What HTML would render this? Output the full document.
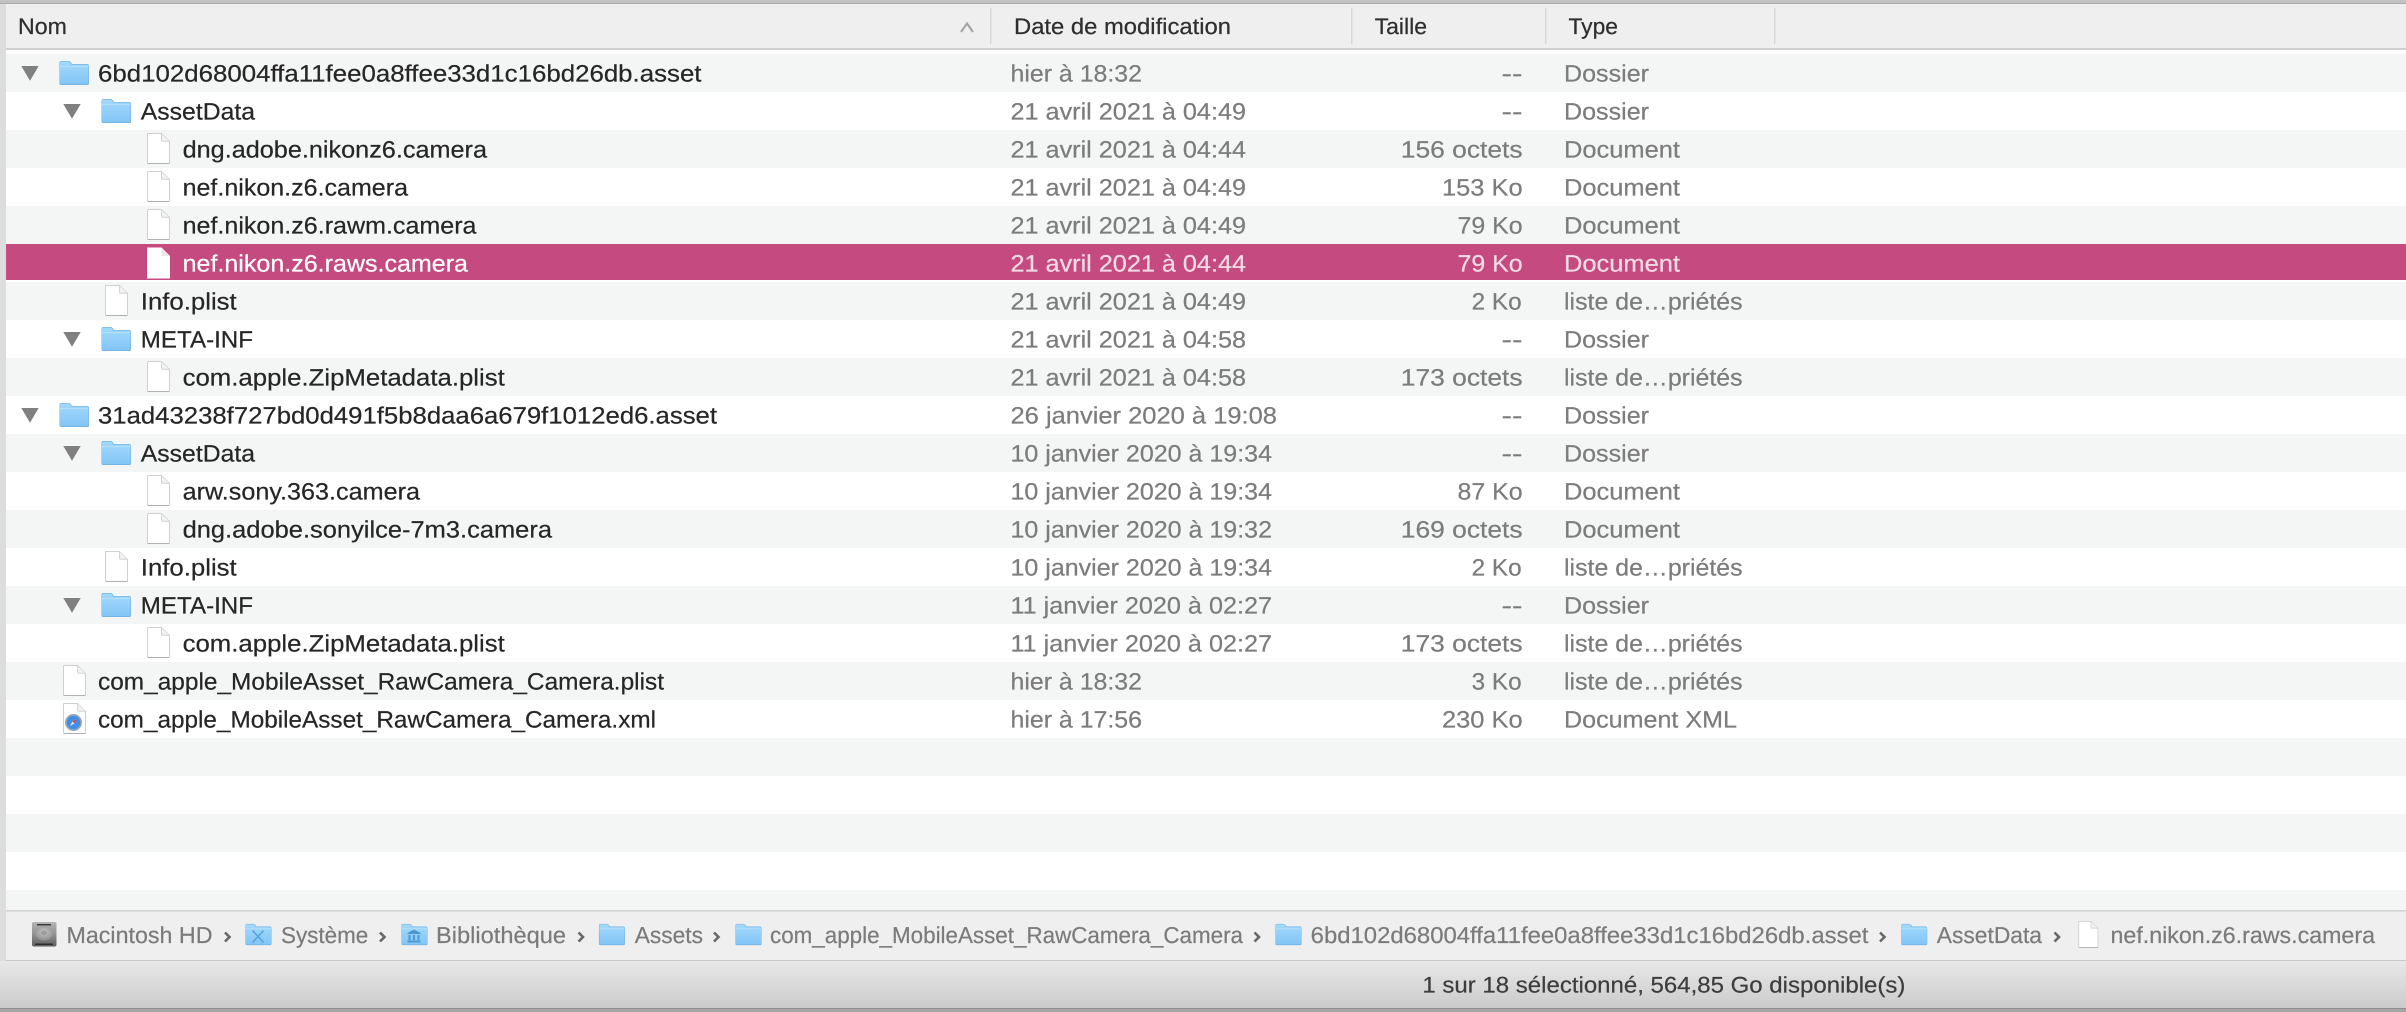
<!DOCTYPE html>
<html lang="fr">
<head>
<meta charset="utf-8">
<title>Finder</title>
<style>
html,body{margin:0;padding:0;background:#fff;width:2406px;height:1012px;overflow:hidden}
svg{display:block;filter:blur(.35px)}
text{font-family:"Liberation Sans",sans-serif;text-rendering:geometricPrecision;white-space:pre;stroke-width:.22px}
.h{font-size:22.5px;fill:#2e2e2e;stroke:#2e2e2e}
.n{font-size:23.6px;fill:#262626;stroke:#262626}
.d{font-size:23.6px;fill:#7c7c7c;stroke:#7c7c7c}
.w{font-size:23.6px;fill:#fff;stroke:#fff}
.p{font-size:23.6px;fill:#f4dbe6;stroke:#f4dbe6}
.b{font-size:23px;fill:#7b7b7b;stroke:#7b7b7b}
.s{font-size:22.5px;fill:#3d3d3d;stroke:#3d3d3d}
</style>
</head>
<body>
<svg xmlns="http://www.w3.org/2000/svg" width="2406" height="1012" viewBox="0 0 2406 1012">
<defs>
<linearGradient id="fg" x1="0" y1="0" x2="0" y2="1"><stop offset="0" stop-color="#a3d9fb"/><stop offset="1" stop-color="#82c5f6"/></linearGradient>
<linearGradient id="sb" x1="0" y1="0" x2="0" y2="1"><stop offset="0" stop-color="#e8e8e8"/><stop offset="1" stop-color="#cbcbcb"/></linearGradient>
<linearGradient id="hd" x1="0" y1="0" x2="0" y2="1"><stop offset="0" stop-color="#b4b4b4"/><stop offset=".55" stop-color="#8d8d8d"/><stop offset="1" stop-color="#5c5c5c"/></linearGradient>
<radialGradient id="pl" cx=".5" cy=".35" r=".7"><stop offset="0" stop-color="#c4c4c4"/><stop offset="1" stop-color="#8b8b8b"/></radialGradient>
<symbol id="folder" viewBox="0 0 30 24">
<path d="M.5 2Q.5 0 2.5 0H9.5Q11 0 12 1.5L13 3H28Q30 3 30 5V22.5Q30 24 28.5 24H2Q.5 24 .5 22.5Z" fill="#6fb0e2"/>
<path d="M1 2.2Q1 .6 2.6 .6H9.4Q10.7 .6 11.5 2L12.4 3.6H28Q29.5 3.6 29.5 5.2V22.3Q29.5 23.2 28.5 23.2H2Q1 23.2 1 22.3Z" fill="url(#fg)"/>
<path d="M1 5.6H29.5" stroke="#b5e1fc" stroke-width="1"/>
</symbol>
<symbol id="file" viewBox="0 0 23 31">
<path d="M.5 1Q.5 .5 1 .5H14.5L22.5 8.5V30Q22.5 30.5 22 30.5H1Q.5 30.5 .5 30Z" fill="#fff" stroke="#cfcfcf" stroke-width="1"/>
<path d="M14.5 .8V7Q14.5 8.3 15.8 8.3H22.2" fill="#f2f2f2" stroke="#d4d4d4" stroke-width="1"/>
<path d="M1 30.5H22" stroke="#b0b0b0" stroke-width="1"/>
</symbol>
<symbol id="tri" viewBox="0 0 17.4 14.7"><path d="M0 0H17.4L8.7 14.7Z" fill="#808080"/></symbol>
<symbol id="chev" viewBox="0 0 8 11"><path d="M1.5 1L6 5.5L1.5 10" fill="none" stroke="#686868" stroke-width="2.6"/></symbol>
</defs>

<!-- window chrome -->
<rect width="2406" height="1012" fill="#fff"/>
<rect x="0" y="0" width="2406" height="4" fill="#c2c2c2"/>
<rect x="0" y="3" width="2406" height="1" fill="#ababab"/>
<rect x="0" y="4" width="2406" height="44" fill="#efefef"/>
<rect x="0" y="48" width="2406" height="2" fill="#cfcfcf"/>
<rect x="0" y="50" width="2406" height="4" fill="#fff"/>

<!-- row stripes -->
<g fill="#f4f5f5">
<rect x="0" y="54" width="2406" height="38"/>
<rect x="0" y="130" width="2406" height="38"/>
<rect x="0" y="206" width="2406" height="38"/>
<rect x="0" y="282" width="2406" height="38"/>
<rect x="0" y="358" width="2406" height="38"/>
<rect x="0" y="434" width="2406" height="38"/>
<rect x="0" y="510" width="2406" height="38"/>
<rect x="0" y="586" width="2406" height="38"/>
<rect x="0" y="662" width="2406" height="38"/>
<rect x="0" y="738" width="2406" height="38"/>
<rect x="0" y="814" width="2406" height="38"/>
<rect x="0" y="890" width="2406" height="20"/>
</g>
<rect x="0" y="244" width="2406" height="36" fill="#c54a80"/>

<!-- path bar + status -->
<rect x="0" y="910" width="2406" height="51" fill="#efefef"/>
<rect x="0" y="910" width="2406" height="1.5" fill="#d2d2d2"/>
<rect x="0" y="960" width="2406" height="1.5" fill="#c8c8c8"/>
<rect x="0" y="961" width="2406" height="47" fill="url(#sb)"/>
<rect x="0" y="1008" width="2406" height="1" fill="#8f8f8f"/>
<rect x="0" y="1009" width="2406" height="3" fill="#a6a6a6"/>
<rect x="0" y="4" width="6" height="957" fill="#dedddd"/>

<!-- header -->
<text class="h" x="18" y="34" textLength="49" lengthAdjust="spacingAndGlyphs">Nom</text>
<path d="M961 32L967 23.5L973 32" fill="none" stroke="#a2a2a2" stroke-width="2"/>
<g fill="#d8d8d8"><rect x="990" y="8" width="1.5" height="36"/><rect x="1351" y="8" width="1.5" height="36"/><rect x="1545" y="8" width="1.5" height="36"/><rect x="1774" y="8" width="1.5" height="36"/></g>
<text class="h" x="1014" y="34" textLength="217" lengthAdjust="spacingAndGlyphs">Date de modification</text>
<text class="h" x="1374.6" y="34" textLength="52.4" lengthAdjust="spacingAndGlyphs">Taille</text>
<text class="h" x="1568.5" y="34" textLength="49.5" lengthAdjust="spacingAndGlyphs">Type</text>

<!-- tree icons -->
<use href="#tri" x="21.3" y="66" width="17.4" height="14.7"/><use href="#folder" x="59" y="61" width="30" height="24"/>
<use href="#tri" x="63.3" y="104" width="17.4" height="14.7"/><use href="#folder" x="101" y="99" width="30" height="24"/>
<use href="#file" x="147" y="133" width="23" height="31"/>
<use href="#file" x="147" y="171" width="23" height="31"/>
<use href="#file" x="147" y="209" width="23" height="31"/>
<path d="M147 247.500H161.500L170 256V278.500H147Z" fill="#fff"/><path d="M161.500 247.500V256H170" fill="#f3e3ea"/>
<use href="#file" x="105" y="285" width="23" height="31"/>
<use href="#tri" x="63.3" y="332" width="17.4" height="14.7"/><use href="#folder" x="101" y="327" width="30" height="24"/>
<use href="#file" x="147" y="361" width="23" height="31"/>
<use href="#tri" x="21.3" y="408" width="17.4" height="14.7"/><use href="#folder" x="59" y="403" width="30" height="24"/>
<use href="#tri" x="63.3" y="446" width="17.4" height="14.7"/><use href="#folder" x="101" y="441" width="30" height="24"/>
<use href="#file" x="147" y="475" width="23" height="31"/>
<use href="#file" x="147" y="513" width="23" height="31"/>
<use href="#file" x="105" y="551" width="23" height="31"/>
<use href="#tri" x="63.3" y="598" width="17.4" height="14.7"/><use href="#folder" x="101" y="593" width="30" height="24"/>
<use href="#file" x="147" y="627" width="23" height="31"/>
<use href="#file" x="63" y="665" width="23" height="31"/>
<use href="#file" x="63" y="703" width="23" height="31"/>
<circle cx="73.500" cy="722.500" r="8.500" fill="#9aa5b5"/><circle cx="73.500" cy="722.500" r="6.800" fill="#3f8fe6"/><path d="M77 719L72.500 721.500L70 726L74.500 723.500Z" fill="#e8e8f0"/><path d="M77 719L72.500 721.500L74.500 723.500Z" fill="#d8403a"/>

<!-- names -->
<text class="n" x="98" y="81.500" textLength="603.500" lengthAdjust="spacingAndGlyphs">6bd102d68004ffa11fee0a8ffee33d1c16bd26db.asset</text>
<text class="n" x="140.800" y="119.500" textLength="114.200" lengthAdjust="spacingAndGlyphs">AssetData</text>
<text class="n" x="182.600" y="157.500" textLength="304.400" lengthAdjust="spacingAndGlyphs">dng.adobe.nikonz6.camera</text>
<text class="n" x="182.600" y="195.500" textLength="225.400" lengthAdjust="spacingAndGlyphs">nef.nikon.z6.camera</text>
<text class="n" x="182.600" y="233.500" textLength="293.900" lengthAdjust="spacingAndGlyphs">nef.nikon.z6.rawm.camera</text>
<text class="w" x="182.600" y="271.500" textLength="285.400" lengthAdjust="spacingAndGlyphs">nef.nikon.z6.raws.camera</text>
<text class="n" x="140.800" y="309.500" textLength="95.900" lengthAdjust="spacingAndGlyphs">Info.plist</text>
<text class="n" x="140.800" y="347.500" textLength="112.200" lengthAdjust="spacingAndGlyphs">META-INF</text>
<text class="n" x="182.600" y="385.500" textLength="322.200" lengthAdjust="spacingAndGlyphs">com.apple.ZipMetadata.plist</text>
<text class="n" x="98" y="423.500" textLength="619" lengthAdjust="spacingAndGlyphs">31ad43238f727bd0d491f5b8daa6a679f1012ed6.asset</text>
<text class="n" x="140.800" y="461.500" textLength="114.200" lengthAdjust="spacingAndGlyphs">AssetData</text>
<text class="n" x="182.600" y="499.500" textLength="237.400" lengthAdjust="spacingAndGlyphs">arw.sony.363.camera</text>
<text class="n" x="182.600" y="537.500" textLength="369.400" lengthAdjust="spacingAndGlyphs">dng.adobe.sonyilce-7m3.camera</text>
<text class="n" x="140.800" y="575.500" textLength="95.900" lengthAdjust="spacingAndGlyphs">Info.plist</text>
<text class="n" x="140.800" y="613.500" textLength="112.200" lengthAdjust="spacingAndGlyphs">META-INF</text>
<text class="n" x="182.600" y="651.500" textLength="322.200" lengthAdjust="spacingAndGlyphs">com.apple.ZipMetadata.plist</text>
<text class="n" x="98" y="689.500" textLength="566" lengthAdjust="spacingAndGlyphs">com_apple_MobileAsset_RawCamera_Camera.plist</text>
<text class="n" x="98" y="727.500" textLength="558" lengthAdjust="spacingAndGlyphs">com_apple_MobileAsset_RawCamera_Camera.xml</text>

<!-- dates -->
<text class="d" x="1010.500" y="81.500" textLength="131.500" lengthAdjust="spacingAndGlyphs">hier à 18:32</text>
<text class="d" x="1010.500" y="119.500" textLength="235.500" lengthAdjust="spacingAndGlyphs">21 avril 2021 à 04:49</text>
<text class="d" x="1010.500" y="157.500" textLength="235.500" lengthAdjust="spacingAndGlyphs">21 avril 2021 à 04:44</text>
<text class="d" x="1010.500" y="195.500" textLength="235.500" lengthAdjust="spacingAndGlyphs">21 avril 2021 à 04:49</text>
<text class="d" x="1010.500" y="233.500" textLength="235.500" lengthAdjust="spacingAndGlyphs">21 avril 2021 à 04:49</text>
<text class="p" x="1010.500" y="271.500" textLength="235.500" lengthAdjust="spacingAndGlyphs">21 avril 2021 à 04:44</text>
<text class="d" x="1010.500" y="309.500" textLength="235.500" lengthAdjust="spacingAndGlyphs">21 avril 2021 à 04:49</text>
<text class="d" x="1010.500" y="347.500" textLength="235.500" lengthAdjust="spacingAndGlyphs">21 avril 2021 à 04:58</text>
<text class="d" x="1010.500" y="385.500" textLength="235.500" lengthAdjust="spacingAndGlyphs">21 avril 2021 à 04:58</text>
<text class="d" x="1010.500" y="423.500" textLength="266.500" lengthAdjust="spacingAndGlyphs">26 janvier 2020 à 19:08</text>
<text class="d" x="1010.500" y="461.500" textLength="261.500" lengthAdjust="spacingAndGlyphs">10 janvier 2020 à 19:34</text>
<text class="d" x="1010.500" y="499.500" textLength="261.500" lengthAdjust="spacingAndGlyphs">10 janvier 2020 à 19:34</text>
<text class="d" x="1010.500" y="537.500" textLength="261.500" lengthAdjust="spacingAndGlyphs">10 janvier 2020 à 19:32</text>
<text class="d" x="1010.500" y="575.500" textLength="261.500" lengthAdjust="spacingAndGlyphs">10 janvier 2020 à 19:34</text>
<text class="d" x="1010.500" y="613.500" textLength="261.500" lengthAdjust="spacingAndGlyphs">11 janvier 2020 à 02:27</text>
<text class="d" x="1010.500" y="651.500" textLength="261.500" lengthAdjust="spacingAndGlyphs">11 janvier 2020 à 02:27</text>
<text class="d" x="1010.500" y="689.500" textLength="131.500" lengthAdjust="spacingAndGlyphs">hier à 18:32</text>
<text class="d" x="1010.500" y="727.500" textLength="131.500" lengthAdjust="spacingAndGlyphs">hier à 17:56</text>

<!-- sizes -->
<text class="d" x="1501.500" y="81.500" textLength="21" lengthAdjust="spacingAndGlyphs">--</text>
<text class="d" x="1501.500" y="119.500" textLength="21" lengthAdjust="spacingAndGlyphs">--</text>
<text class="d" x="1400.800" y="157.500" textLength="121.800" lengthAdjust="spacingAndGlyphs">156 octets</text>
<text class="d" x="1442" y="195.500" textLength="80.600" lengthAdjust="spacingAndGlyphs">153 Ko</text>
<text class="d" x="1457.500" y="233.500" textLength="65.100" lengthAdjust="spacingAndGlyphs">79 Ko</text>
<text class="p" x="1457.500" y="271.500" textLength="65.100" lengthAdjust="spacingAndGlyphs">79 Ko</text>
<text class="d" x="1471.600" y="309.500" textLength="50" lengthAdjust="spacingAndGlyphs">2 Ko</text>
<text class="d" x="1501.500" y="347.500" textLength="21" lengthAdjust="spacingAndGlyphs">--</text>
<text class="d" x="1400.800" y="385.500" textLength="121.800" lengthAdjust="spacingAndGlyphs">173 octets</text>
<text class="d" x="1501.500" y="423.500" textLength="21" lengthAdjust="spacingAndGlyphs">--</text>
<text class="d" x="1501.500" y="461.500" textLength="21" lengthAdjust="spacingAndGlyphs">--</text>
<text class="d" x="1457.500" y="499.500" textLength="65.100" lengthAdjust="spacingAndGlyphs">87 Ko</text>
<text class="d" x="1400.800" y="537.500" textLength="121.800" lengthAdjust="spacingAndGlyphs">169 octets</text>
<text class="d" x="1471.600" y="575.500" textLength="50" lengthAdjust="spacingAndGlyphs">2 Ko</text>
<text class="d" x="1501.500" y="613.500" textLength="21" lengthAdjust="spacingAndGlyphs">--</text>
<text class="d" x="1400.800" y="651.500" textLength="121.800" lengthAdjust="spacingAndGlyphs">173 octets</text>
<text class="d" x="1471.600" y="689.500" textLength="50" lengthAdjust="spacingAndGlyphs">3 Ko</text>
<text class="d" x="1442" y="727.500" textLength="80.600" lengthAdjust="spacingAndGlyphs">230 Ko</text>

<!-- types -->
<text class="d" x="1564" y="81.500" textLength="85" lengthAdjust="spacingAndGlyphs">Dossier</text>
<text class="d" x="1564" y="119.500" textLength="85" lengthAdjust="spacingAndGlyphs">Dossier</text>
<text class="d" x="1564" y="157.500" textLength="116" lengthAdjust="spacingAndGlyphs">Document</text>
<text class="d" x="1564" y="195.500" textLength="116" lengthAdjust="spacingAndGlyphs">Document</text>
<text class="d" x="1564" y="233.500" textLength="116" lengthAdjust="spacingAndGlyphs">Document</text>
<text class="p" x="1564" y="271.500" textLength="116" lengthAdjust="spacingAndGlyphs">Document</text>
<text class="d" x="1564" y="309.500" textLength="178.600" lengthAdjust="spacingAndGlyphs">liste de…priétés</text>
<text class="d" x="1564" y="347.500" textLength="85" lengthAdjust="spacingAndGlyphs">Dossier</text>
<text class="d" x="1564" y="385.500" textLength="178.600" lengthAdjust="spacingAndGlyphs">liste de…priétés</text>
<text class="d" x="1564" y="423.500" textLength="85" lengthAdjust="spacingAndGlyphs">Dossier</text>
<text class="d" x="1564" y="461.500" textLength="85" lengthAdjust="spacingAndGlyphs">Dossier</text>
<text class="d" x="1564" y="499.500" textLength="116" lengthAdjust="spacingAndGlyphs">Document</text>
<text class="d" x="1564" y="537.500" textLength="116" lengthAdjust="spacingAndGlyphs">Document</text>
<text class="d" x="1564" y="575.500" textLength="178.600" lengthAdjust="spacingAndGlyphs">liste de…priétés</text>
<text class="d" x="1564" y="613.500" textLength="85" lengthAdjust="spacingAndGlyphs">Dossier</text>
<text class="d" x="1564" y="651.500" textLength="178.600" lengthAdjust="spacingAndGlyphs">liste de…priétés</text>
<text class="d" x="1564" y="689.500" textLength="178.600" lengthAdjust="spacingAndGlyphs">liste de…priétés</text>
<text class="d" x="1564" y="727.500" textLength="173" lengthAdjust="spacingAndGlyphs">Document XML</text>

<!-- path bar -->
<rect x="32" y="922" width="24.500" height="24.500" rx="2" fill="url(#hd)"/>
<rect x="37" y="924" width="14" height="1.500" fill="#3a3a3a"/><rect x="35" y="943.500" width="18" height="1.500" fill="#2e2e2e"/>
<ellipse cx="44" cy="934" rx="8.500" ry="6.500" fill="url(#pl)"/><ellipse cx="44" cy="933" rx="3" ry="2.200" fill="#9c9c9c"/>
<text class="b" x="66.500" y="943.200" textLength="146" lengthAdjust="spacingAndGlyphs">Macintosh HD</text>
<use href="#chev" x="223.500" y="931.500" width="8" height="11"/>

<use href="#folder" x="245" y="923" width="26.500" height="23"/>
<path d="M252.500 930.500L263.500 942.500M263.500 930.500L252.500 942.500" stroke="#58a3dc" stroke-width="1.600" fill="none"/>
<text class="b" x="281" y="943.200" textLength="87.300" lengthAdjust="spacingAndGlyphs">Système</text>
<use href="#chev" x="378.500" y="931.500" width="8" height="11"/>

<use href="#folder" x="401" y="923" width="26.500" height="23"/>
<path d="M407.500 933L414 929.500L420.500 933V934H407.500ZM408.500 935H410.500V940H408.500ZM413 935H415V940H413ZM417.500 935H419.500V940H417.500ZM407.500 940.500H420.500V942.500H407.500Z" fill="#4b97d3"/>
<text class="b" x="436" y="943.200" textLength="130" lengthAdjust="spacingAndGlyphs">Bibliothèque</text>
<use href="#chev" x="577" y="931.500" width="8" height="11"/>

<use href="#folder" x="598.500" y="923" width="26.500" height="23"/>
<text class="b" x="634.700" y="943.200" textLength="68.300" lengthAdjust="spacingAndGlyphs">Assets</text>
<use href="#chev" x="712.500" y="931.500" width="8" height="11"/>

<use href="#folder" x="735" y="923" width="26.500" height="23"/>
<text class="b" x="770" y="943.200" textLength="473" lengthAdjust="spacingAndGlyphs">com_apple_MobileAsset_RawCamera_Camera</text>
<use href="#chev" x="1253" y="931.500" width="8" height="11"/>

<use href="#folder" x="1275" y="923" width="26.500" height="23"/>
<text class="b" x="1310.700" y="943.200" textLength="557.700" lengthAdjust="spacingAndGlyphs">6bd102d68004ffa11fee0a8ffee33d1c16bd26db.asset</text>
<use href="#chev" x="1878.500" y="931.500" width="8" height="11"/>

<use href="#folder" x="1900.800" y="923" width="26.500" height="23"/>
<text class="b" x="1936.800" y="943.200" textLength="105.200" lengthAdjust="spacingAndGlyphs">AssetData</text>
<use href="#chev" x="2053" y="931.500" width="8" height="11"/>

<use href="#file" x="2078" y="921" width="20.700" height="27"/>
<text class="b" x="2110.500" y="943.200" textLength="264.500" lengthAdjust="spacingAndGlyphs">nef.nikon.z6.raws.camera</text>

<!-- status -->
<text class="s" x="1422.400" y="992.500" textLength="483" lengthAdjust="spacingAndGlyphs">1 sur 18 sélectionné, 564,85 Go disponible(s)</text>
</svg>
</body>
</html>
